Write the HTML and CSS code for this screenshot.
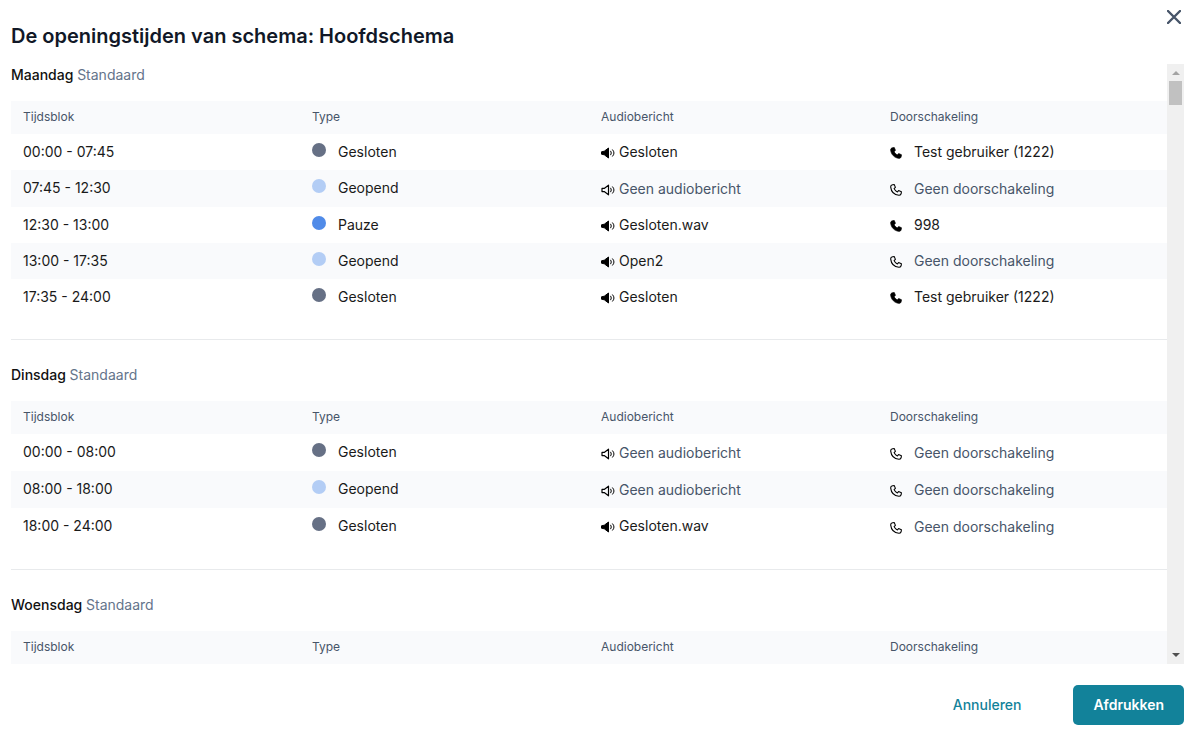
FILE: index.html
```
<!DOCTYPE html>
<html lang="nl">
<head>
  <meta charset="UTF-8">
  <meta name="viewport" content="width=device-width, initial-scale=1.0">
  <title>Openingstijden afdrukken</title>
  <link rel="stylesheet" href="styles.css">
</head>
<body>
  <!-- shared icons -->
  <svg class="sprite" aria-hidden="true">
    <symbol id="volume-fill" viewBox="0 0 14 12">
      <path d="M.5 4.8 3.3 4.2 7.5 1v10L3.300 7.800.5 7.200z" fill="currentColor" stroke="currentColor" stroke-linejoin="round"/>
      <path d="M9.800 4.200q1.200 1.800 0 3.600M11.600 2.800q3 3.200 0 6.400" fill="none" stroke="currentColor" stroke-linecap="round"/>
    </symbol>
    <symbol id="volume" viewBox="0 0 14 12">
      <path d="M1 4.400h2.200L7.500 1.200v9.600L3.200 7.600H1z" fill="none" stroke="currentColor" stroke-width="1.200" stroke-linejoin="round"/>
      <path d="M9.800 4.200q1.200 1.800 0 3.600M11.600 2.800q3 3.200 0 6.400" fill="none" stroke="currentColor" stroke-linecap="round"/>
    </symbol>
    <symbol id="phone-fill" viewBox="0 0 12 12">
      <path fill="currentColor" stroke="currentColor" stroke-width=".8" stroke-linejoin="round" d="M2.600.8 4.300.6 5.400 3.400 4.100 4.600C4.800 6.200 5.800 7.200 7.400 7.900L8.600 6.600 11.400 7.700 11.200 9.400C11 10.800 10 11.400 8.900 11.300 4.400 10.800 1.200 7.600.7 3.100.6 2 1.200 1 2.600.8z"/>
    </symbol>
    <symbol id="phone" viewBox="0 0 12 12">
      <path fill="none" stroke="currentColor" stroke-width="1.100" stroke-linejoin="round" d="M2.600.8 4.300.6 5.400 3.400 4.100 4.600C4.800 6.200 5.800 7.200 7.400 7.900L8.600 6.600 11.400 7.700 11.200 9.400C11 10.800 10 11.400 8.900 11.300 4.400 10.800 1.200 7.600.7 3.100.6 2 1.200 1 2.600.8z"/>
    </symbol>
  </svg>

  <div class="dialog" role="dialog" aria-labelledby="dialog-title">
    <header class="dialog-header">
      <h1 class="dialog-title" id="dialog-title">De openingstijden van schema: Hoofdschema</h1>
      <button type="button" class="close" aria-label="Sluiten">
        <svg viewBox="0 0 14 14"><path d="M1 1l12 12M13 1L1 13"/></svg>
      </button>
    </header>

    <div class="dialog-body">
      <main class="schedule">
        <section class="day">
          <h2 class="day-title">Maandag <span>Standaard</span></h2>
          <table>
            <thead>
              <tr><th>Tijdsblok</th><th>Type</th><th>Audiobericht</th><th>Doorschakeling</th></tr>
            </thead>
            <tbody>
              <tr>
                <td>00:00 - 07:45</td>
                <td><span class="dot closed"></span>Gesloten</td>
                <td><svg class="volume"><use href="#volume-fill"/></svg>Gesloten</td>
                <td><svg class="phone"><use href="#phone-fill"/></svg>Test gebruiker (1222)</td>
              </tr>
              <tr class="tall">
                <td>07:45 - 12:30</td>
                <td><span class="dot open"></span>Geopend</td>
                <td class="none"><svg class="volume"><use href="#volume"/></svg>Geen audiobericht</td>
                <td class="none"><svg class="phone"><use href="#phone"/></svg>Geen doorschakeling</td>
              </tr>
              <tr>
                <td>12:30 - 13:00</td>
                <td><span class="dot pause"></span>Pauze</td>
                <td><svg class="volume"><use href="#volume-fill"/></svg>Gesloten.wav</td>
                <td><svg class="phone"><use href="#phone-fill"/></svg>998</td>
              </tr>
              <tr>
                <td>13:00 - 17:35</td>
                <td><span class="dot open"></span>Geopend</td>
                <td><svg class="volume"><use href="#volume-fill"/></svg>Open2</td>
                <td class="none"><svg class="phone"><use href="#phone"/></svg>Geen doorschakeling</td>
              </tr>
              <tr>
                <td>17:35 - 24:00</td>
                <td><span class="dot closed"></span>Gesloten</td>
                <td><svg class="volume"><use href="#volume-fill"/></svg>Gesloten</td>
                <td><svg class="phone"><use href="#phone-fill"/></svg>Test gebruiker (1222)</td>
              </tr>
            </tbody>
          </table>
        </section>

        <section class="day">
          <h2 class="day-title">Dinsdag <span>Standaard</span></h2>
          <table>
            <thead>
              <tr><th>Tijdsblok</th><th>Type</th><th>Audiobericht</th><th>Doorschakeling</th></tr>
            </thead>
            <tbody>
              <tr class="tall">
                <td>00:00 - 08:00</td>
                <td><span class="dot closed"></span>Gesloten</td>
                <td class="none"><svg class="volume"><use href="#volume"/></svg>Geen audiobericht</td>
                <td class="none"><svg class="phone"><use href="#phone"/></svg>Geen doorschakeling</td>
              </tr>
              <tr class="tall">
                <td>08:00 - 18:00</td>
                <td><span class="dot open"></span>Geopend</td>
                <td class="none"><svg class="volume"><use href="#volume"/></svg>Geen audiobericht</td>
                <td class="none"><svg class="phone"><use href="#phone"/></svg>Geen doorschakeling</td>
              </tr>
              <tr class="tall">
                <td>18:00 - 24:00</td>
                <td><span class="dot closed"></span>Gesloten</td>
                <td><svg class="volume"><use href="#volume-fill"/></svg>Gesloten.wav</td>
                <td class="none"><svg class="phone"><use href="#phone"/></svg>Geen doorschakeling</td>
              </tr>
            </tbody>
          </table>
        </section>

        <section class="day">
          <h2 class="day-title">Woensdag <span>Standaard</span></h2>
          <table>
            <thead>
              <tr><th>Tijdsblok</th><th>Type</th><th>Audiobericht</th><th>Doorschakeling</th></tr>
            </thead>
          </table>
        </section>
      </main>

      <div class="scrollbar" aria-hidden="true">
        <svg class="arrow up" viewBox="0 0 8 4"><path d="M0 4l4-4 4 4z"/></svg>
        <div class="thumb"></div>
        <svg class="arrow down" viewBox="0 0 8 4"><path d="M0 0l4 4 4-4z"/></svg>
      </div>
    </div>

    <footer class="dialog-footer">
      <button type="button" class="btn btn-link">Annuleren</button>
      <button type="button" class="btn btn-primary">Afdrukken</button>
    </footer>
  </div>
</body>
</html>
```

FILE: styles.css
```
* {
  box-sizing: border-box;
}
body {
  margin: 0;
  font-family: Inter, 'Liberation Sans', sans-serif;
  font-size: 14px;
  line-height: 20px;
  color: #1a1a1a;
  background: #fff;
}
button {
  font: inherit;
  border: none;
  background: none;
  cursor: pointer;
}
.sprite {
  display: none;
}
.dialog {
  display: flex;
  flex-direction: column;
  height: 100vh;
  padding: 0 14px 0 11px;
}

/* header */
.dialog-header {
  display: flex;
  justify-content: space-between;
  align-items: flex-start;
  height: 64px;
}
.dialog-title {
  margin: 22px 0 0;
  font-size: 20px;
  line-height: 28px;
  font-weight: 600;
  color: #111827;
}
.close {
  display: flex;
  padding: 10px 3px;
}
.close svg {
  width: 14px;
  height: 14px;
  fill: none;
  stroke: #475569;
  stroke-width: 2.4;
  stroke-linecap: round;
}

/* schedule */
.dialog-body {
  display: flex;
  flex: 1;
  min-height: 0;
}
.schedule {
  flex: 1;
  overflow: hidden;
}
.day + .day {
  margin-top: 24px;
  padding-top: 24px;
  border-top: 1px solid #e8eaec;
}
.day-title {
  margin: 0 0 15px;
  font-size: 14px;
  line-height: 22px;
  font-weight: 500;
  color: #111;
}
.day-title span {
  font-weight: 400;
  color: #64748b;
}
table {
  width: 100%;
  border-collapse: collapse;
  table-layout: fixed;
}
th {
  height: 33px;
  padding: 0 12px 2px;
  font-size: 12px;
  line-height: 16px;
  font-weight: 400;
  text-align: left;
  color: #475569;
  background: #f9fafc;
}
td {
  height: 36px;
  padding: 0 12px;
}
.tall td {
  height: 37px;
  padding-bottom: 2px;
}
.tall .none {
  padding-bottom: 0;
}
tbody tr:nth-child(even) {
  background: #f9fafc;
}
.none {
  color: #475569;
}
.dot {
  display: inline-block;
  width: 14px;
  height: 14px;
  margin-right: 12px;
  border-radius: 50%;
}
.closed {
  background: #667085;
}
.open {
  background: #b3cdf5;
}
.pause {
  background: #508be8;
}
.volume,
.phone {
  color: #000;
  vertical-align: -2px;
}
.volume {
  width: 14px;
  height: 12px;
  margin-right: 4px;
}
.phone {
  width: 12px;
  height: 12px;
  margin-right: 12px;
}

/* scrollbar */
.scrollbar {
  display: flex;
  flex-direction: column;
  align-items: center;
  width: 17px;
  padding: 7px 0;
  background: #f0f0f0;
}
.thumb {
  width: 13px;
  height: 24px;
  margin-top: 6px;
  background: #c1c1c1;
}
.arrow {
  width: 8px;
  height: 4px;
}
.up {
  fill: #a3a3a3;
}
.down {
  margin-top: auto;
  fill: #505050;
}

/* footer */
.dialog-footer {
  display: flex;
  justify-content: flex-end;
  gap: 32px;
  padding: 21px 0;
}
.btn {
  height: 40px;
  padding: 0 20px;
  border-radius: 5px;
}
.btn-link {
  font-weight: 500;
  color: #12829a;
}
.btn-primary {
  font-weight: 600;
  color: #fff;
  background: #12829a;
}
```
